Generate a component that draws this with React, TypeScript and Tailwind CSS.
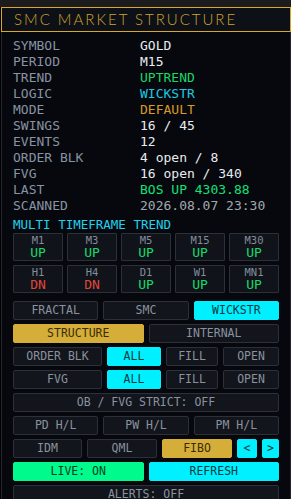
const mono = { fontFamily: '"DejaVu Sans Mono", "Liberation Mono", monospace' };

type Tone = "off" | "cyan" | "gold" | "green";

const rows: { label: string; value: string; color: string }[] = [
  { label: "SYMBOL", value: "GOLD", color: "text-[#e9ecf0]" },
  { label: "PERIOD", value: "M15", color: "text-[#e9ecf0]" },
  { label: "TREND", value: "UPTREND", color: "text-[#19d76a]" },
  { label: "LOGIC", value: "WICKSTR", color: "text-[#1ec8e0]" },
  { label: "MODE", value: "DEFAULT", color: "text-[#d69a26]" },
  { label: "SWINGS", value: "16 / 45", color: "text-[#e9ecf0]" },
  { label: "EVENTS", value: "12", color: "text-[#e9ecf0]" },
  { label: "ORDER BLK", value: "4 open / 8", color: "text-[#e9ecf0]" },
  { label: "FVG", value: "16 open / 340", color: "text-[#e9ecf0]" },
  { label: "LAST", value: "BOS UP 4303.88", color: "text-[#12e07a]" },
  { label: "SCANNED", value: "2026.08.07 23:30", color: "text-[#a3a8b0]" },
];

const frames = [
  ["M1", "UP"], ["M3", "UP"], ["M5", "UP"], ["M15", "UP"], ["M30", "UP"],
  ["H1", "DN"], ["H4", "DN"], ["D1", "UP"], ["W1", "UP"], ["MN1", "UP"],
];

function Btn({ label, tone = "off", className = "" }: { label: string; tone?: Tone; className?: string }) {
  const look = {
    off: "bg-[#12151c] border-[#2c3038] text-[#8a929e]",
    cyan: "bg-[#00f0ff] border-[#00f0ff] text-[#0b3940]",
    gold: "bg-[#d4ae38] border-[#d4ae38] text-[#3b2c05]",
    green: "bg-[#00fa8c] border-[#00fa8c] text-[#063d22]",
  }[tone];
  return (
    <div
      className={`flex h-[19px] items-center justify-center rounded-[2px] border text-[11.5px] leading-none ${look} ${className}`}
      style={mono}
    >
      {label}
    </div>
  );
}

export default function App() {
  return (
    <div className="h-[499px] w-[291px] overflow-hidden bg-black">
      <div className="h-[7px] bg-[#1c1c1e]" />
      <div className="ml-[1px] h-[492px] w-[290px] border-x border-[#23262c] bg-[#06080d]">
        <div className="-mx-px flex h-[25px] items-center border border-[#d6a92a] bg-[#0d1017] pl-[12px]">
          <span
            className="text-[15px] font-light tracking-[2px] text-[#cfa52a]"
            style={{ fontFamily: 'Lato, "Open Sans", sans-serif' }}
          >
            SMC MARKET STRUCTURE
          </span>
        </div>

        <div className="px-[11px] pt-[6px]">
          <div className="text-[13px] leading-[16px]" style={mono}>
            {rows.map((r) => (
              <div key={r.label} className="flex">
                <span className="w-[127px] text-[#8793a3]">{r.label}</span>
                <span className={r.color}>{r.value}</span>
              </div>
            ))}
          </div>

          <div className="mt-[3px] text-[12.5px] leading-[16px] text-[#1fd3ee]" style={mono}>
            MULTI TIMEFRAME TREND
          </div>

          <div className="grid grid-cols-5 gap-[4px]">
            {frames.map(([tf, dir]) => (
              <div
                key={tf}
                className="flex h-[28px] flex-col items-center justify-center rounded-[1px] border border-[#2c3038] bg-[#101319]"
                style={mono}
              >
                <span className="text-[10.5px] leading-[12px] text-[#838d9c]">{tf}</span>
                <span className={`text-[13px] leading-[14px] ${dir === "UP" ? "text-[#16d96c]" : "text-[#e0473c]"}`}>
                  {dir}
                </span>
              </div>
            ))}
          </div>

          <div className="mt-[8px] flex flex-col gap-[4px]">
            <div className="grid grid-cols-3 gap-[5px]">
              <Btn label="FRACTAL" />
              <Btn label="SMC" />
              <Btn label="WICKSTR" tone="cyan" />
            </div>
            <div className="grid grid-cols-2 gap-[5px]">
              <Btn label="STRUCTURE" tone="gold" />
              <Btn label="INTERNAL" />
            </div>
            <div className="flex gap-[5px]">
              <Btn label="ORDER BLK" className="w-[89px]" />
              <Btn label="ALL" tone="cyan" className="w-[54px]" />
              <Btn label="FILL" className="w-[52px]" />
              <Btn label="OPEN" className="flex-1" />
            </div>
            <div className="flex gap-[5px]">
              <Btn label="FVG" className="w-[89px]" />
              <Btn label="ALL" tone="cyan" className="w-[54px]" />
              <Btn label="FILL" className="w-[52px]" />
              <Btn label="OPEN" className="flex-1" />
            </div>
            <Btn label="OB / FVG STRICT: OFF" />
            <div className="grid grid-cols-3 gap-[5px]">
              <Btn label="PD H/L" />
              <Btn label="PW H/L" />
              <Btn label="PM H/L" />
            </div>
            <div className="flex gap-[5px]">
              <Btn label="IDM" className="w-[69px]" />
              <Btn label="QML" className="w-[70px]" />
              <Btn label="FIBO" tone="gold" className="w-[70px]" />
              <Btn label="<" tone="cyan" className="w-[20px]" />
              <Btn label=">" tone="cyan" className="flex-1" />
            </div>
            <div className="grid grid-cols-2 gap-[5px]">
              <Btn label="LIVE: ON" tone="green" />
              <Btn label="REFRESH" tone="cyan" />
            </div>
            <Btn label="ALERTS: OFF" />
          </div>
        </div>
      </div>
    </div>
  );
}
